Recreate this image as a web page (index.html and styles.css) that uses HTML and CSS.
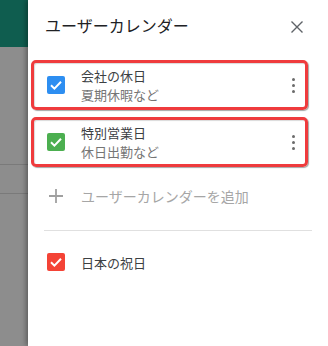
FILE: index.html
```html
<!DOCTYPE html>
<html lang="ja">
<head>
<meta charset="utf-8">
<link rel="stylesheet" href="styles.css">
</head>
<body>
<div class="screen">
  <div class="backdrop">
    <div class="bd-header"></div>
    <div class="bd-body">
      <div class="bd-line l1"></div>
      <div class="bd-line l2"></div>
    </div>
  </div>
  <div class="panel">
    <div class="header">
      <div class="title">ユーザーカレンダー</div>
      <svg class="close" width="14" height="14" viewBox="0 0 14 14"><path d="M1.5 1.5L12.5 12.5M12.5 1.5L1.5 12.5" stroke="#5f6368" stroke-width="1.4" fill="none"/></svg>
    </div>
    <div class="item hl">
      <span class="cb blue"><svg width="18" height="18" viewBox="0 0 18 18"><path d="M4 9.3L7.4 12.6L14 5.8" stroke="#fff" stroke-width="2" fill="none"/></svg></span>
      <div class="texts">
        <div class="name">会社の休日</div>
        <div class="sub">夏期休暇など</div>
      </div>
      <span class="dots"><i></i><i></i><i></i></span>
    </div>
    <div class="item hl second">
      <span class="cb green"><svg width="18" height="18" viewBox="0 0 18 18"><path d="M4 9.3L7.4 12.6L14 5.8" stroke="#fff" stroke-width="2" fill="none"/></svg></span>
      <div class="texts">
        <div class="name">特別営業日</div>
        <div class="sub">休日出勤など</div>
      </div>
      <span class="dots"><i></i><i></i><i></i></span>
    </div>
    <div class="add">
      <svg class="plus" width="14" height="14" viewBox="0 0 14 14"><path d="M7 0V14M0 7H14" stroke="#a0a0a0" stroke-width="1.8" fill="none"/></svg>
      <span class="add-label">ユーザーカレンダーを追加</span>
    </div>
    <div class="divider"></div>
    <div class="row">
      <span class="cb red"><svg width="18" height="18" viewBox="0 0 18 18"><path d="M4 9.3L7.4 12.6L14 5.8" stroke="#fff" stroke-width="2" fill="none"/></svg></span>
      <span class="row-label">日本の祝日</span>
    </div>
  </div>
</div>
</body>
</html>
```
FILE: styles.css
```css
html, body {
  margin: 0;
  padding: 0;
  background: #fff;
}
body {
  font-family: "Noto Sans CJK JP", "Noto Sans", sans-serif;
}
.screen {
  display: flex;
  width: 328px;
  height: 346px;
  overflow: hidden;
}
.backdrop {
  width: 28px;
  flex: none;
  display: flex;
  flex-direction: column;
}
.bd-header {
  height: 47px;
  background: #0f5d4f;
}
.bd-body {
  flex: 1;
  background: #8d8d8d;
  display: flex;
  flex-direction: column;
}
.bd-line {
  height: 1px;
  background: #7a7a7a;
}
.bd-line.l1 { margin-top: 117px; }
.bd-line.l2 { margin-top: 28px; }
.panel {
  flex: 1;
  background: #fff;
  box-shadow: -2px 0 5px rgba(0,0,0,0.35);
  position: relative;
  display: flex;
  flex-direction: column;
}
.header {
  height: 60px;
  display: flex;
  align-items: flex-start;
  justify-content: space-between;
  padding: 15px 24px 0 17px;
  box-sizing: border-box;
}
.title {
  font-size: 16px;
  line-height: 20px;
  color: #202124;
}
.close {
  margin-top: 5px;
}
.item {
  height: 50px;
  box-sizing: border-box;
  margin: 0 20px 0 3px;
  display: flex;
  align-items: center;
  padding: 0 10px 0 13px;
}
.item.hl {
  border: 3px solid #ef3b3d;
  border-radius: 5px;
  box-shadow: 1px 1px 1px rgba(0,0,0,0.35), inset 1px 1px 1px rgba(0,0,0,0.15);
}
.item.second {
  margin-top: 7px;
}
.cb {
  width: 18px;
  height: 18px;
  border-radius: 2px;
  flex: none;
  display: block;
}
.cb svg { display: block; }
.blue { background: #2d8ef1; }
.green { background: #4caf50; }
.red { background: #f44336; }
.texts {
  margin-left: 16px;
  flex: 1;
  margin-bottom: 1px;
}
.name {
  font-size: 13px;
  line-height: 19px;
  color: #3c4043;
}
.sub {
  font-size: 13px;
  line-height: 19px;
  color: #757575;
}
.dots {
  display: flex;
  flex-direction: column;
  gap: 3px;
  margin-top: 1px;
}
.dots i {
  width: 3px;
  height: 3px;
  border-radius: 50%;
  background: #6b6b6b;
  display: block;
}
.add {
  margin-top: 12px;
  height: 34px;
  display: flex;
  align-items: center;
  padding-left: 21px;
}
.add-label {
  margin-left: 18px;
  font-size: 14px;
  color: #a6a6a6;
}
.divider {
  margin: 17px 16px 0 16px;
  height: 1px;
  background: #e0e0e0;
}
.row {
  margin-top: 15px;
  height: 32px;
  display: flex;
  align-items: center;
  padding-left: 19px;
}
.row-label {
  margin-left: 16px;
  font-size: 13px;
  color: #3c4043;
}
```
